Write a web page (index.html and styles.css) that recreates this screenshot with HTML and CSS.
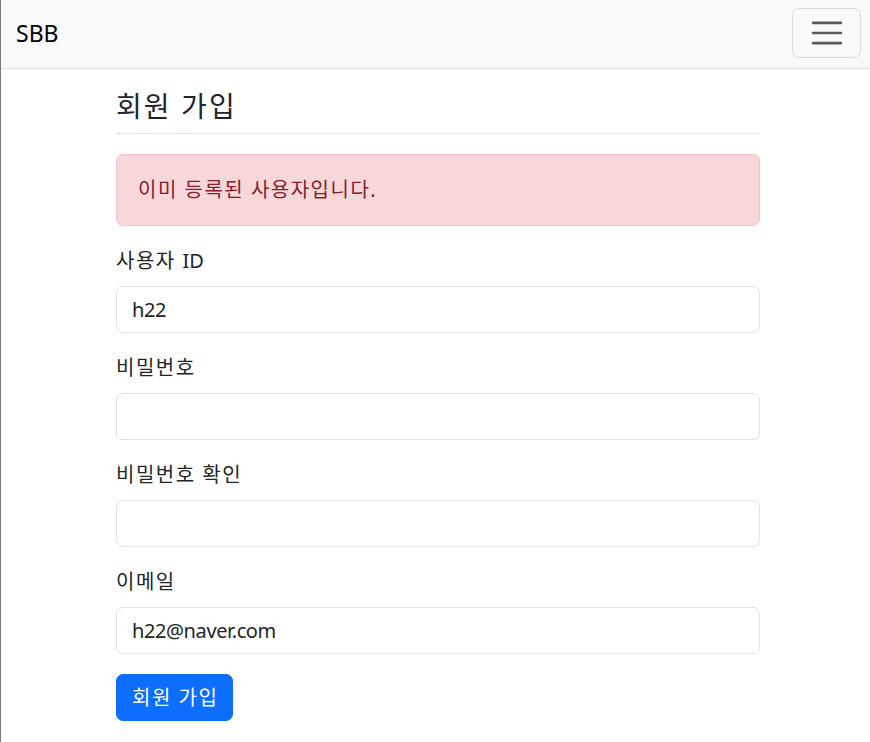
FILE: index.html
```html
<!DOCTYPE html>
<html lang="ko">
<head>
<meta charset="utf-8">
<title>SBB</title>
<link rel="stylesheet" href="styles.css">
</head>
<body>
<nav class="navbar">
  <a class="brand" href="#">SBB</a>
  <button class="toggler" type="button" aria-label="Toggle navigation">
    <svg class="toggler-icon" viewBox="0 0 30 30" width="38" height="38">
      <path d="M4 7h22M4 15h22M4 23h22" stroke="rgba(33,37,41,0.75)" stroke-width="2" stroke-linecap="round" fill="none"/>
    </svg>
  </button>
</nav>
<main class="container">
  <h4 class="title ko">회원 가입</h4>
  <form class="form">
    <div class="alert ko" role="alert">이미 등록된 사용자입니다.</div>
    <div class="field">
      <label class="form-label ko" for="username">사용자 <span class="latin">ID</span></label>
      <input class="form-control" id="username" type="text" value="h22">
    </div>
    <div class="field">
      <label class="form-label ko" for="password1">비밀번호</label>
      <input class="form-control" id="password1" type="password">
    </div>
    <div class="field">
      <label class="form-label ko" for="password2">비밀번호 확인</label>
      <input class="form-control" id="password2" type="password">
    </div>
    <div class="field">
      <label class="form-label ko" for="email">이메일</label>
      <input class="form-control" id="email" type="email" value="h22@naver.com">
    </div>
    <button type="submit" class="btn-primary ko">회원 가입</button>
  </form>
</main>
</body>
</html>
```
FILE: styles.css
```css
* { box-sizing: border-box; }
html { border-left: 1px solid #7a7a7a; min-height: 100%; }
body {
  margin: 0;
  font-family: "Noto Sans", "Noto Sans CJK KR", sans-serif;
  font-size: 20px;
  line-height: 30px;
  color: #212529;
  background: #fff;
}
.ko { letter-spacing: 0.075em; }
.latin { letter-spacing: 0; }
.navbar {
  height: 69px;
  background: #f8f9fa;
  border-bottom: 1px solid #dee2e6;
  display: flex;
  align-items: center;
  justify-content: space-between;
  padding: 0 9px 2px 15px;
}
.brand {
  font-size: 23px;
  color: #000;
  text-decoration: none;
  line-height: 30px;
}
.toggler {
  width: 69px;
  height: 50px;
  border: 1px solid rgba(0,0,0,0.12);
  border-radius: 7px;
  background: transparent;
  padding: 0;
  display: flex;
  align-items: center;
  justify-content: center;
}
.toggler-icon { display: block; }
.container {
  width: 644px;
  margin: 0 0 0 115px;
}
.title {
  margin: 20px 0 20px;
  font-size: 28px;
  font-weight: 400;
  line-height: 34px;
  padding-bottom: 10px;
  border-bottom: 1px solid #dee2e6;
}
.alert {
  background: #f8d7da;
  border: 1px solid #f5c2c7;
  color: #842029;
  border-radius: 7px;
  padding: 20px 21px;
  margin-bottom: 20px;
}
.field { margin-bottom: 20px; }
.form-label {
  display: block;
  margin-bottom: 10px;
}
.form-control {
  display: block;
  width: 100%;
  height: 47px;
  padding: 7px 15px;
  font: inherit;
  letter-spacing: -0.4px;
  color: #212529;
  background: #fff;
  border: 1px solid #dee2e6;
  border-radius: 7px;
}
.btn-primary {
  font: inherit;
  letter-spacing: 0.075em;
  color: #fff;
  background: #0d6efd;
  border: 1px solid #0d6efd;
  border-radius: 7px;
  padding: 7px 14px 7px 15px;
  height: 47px;
}
```
